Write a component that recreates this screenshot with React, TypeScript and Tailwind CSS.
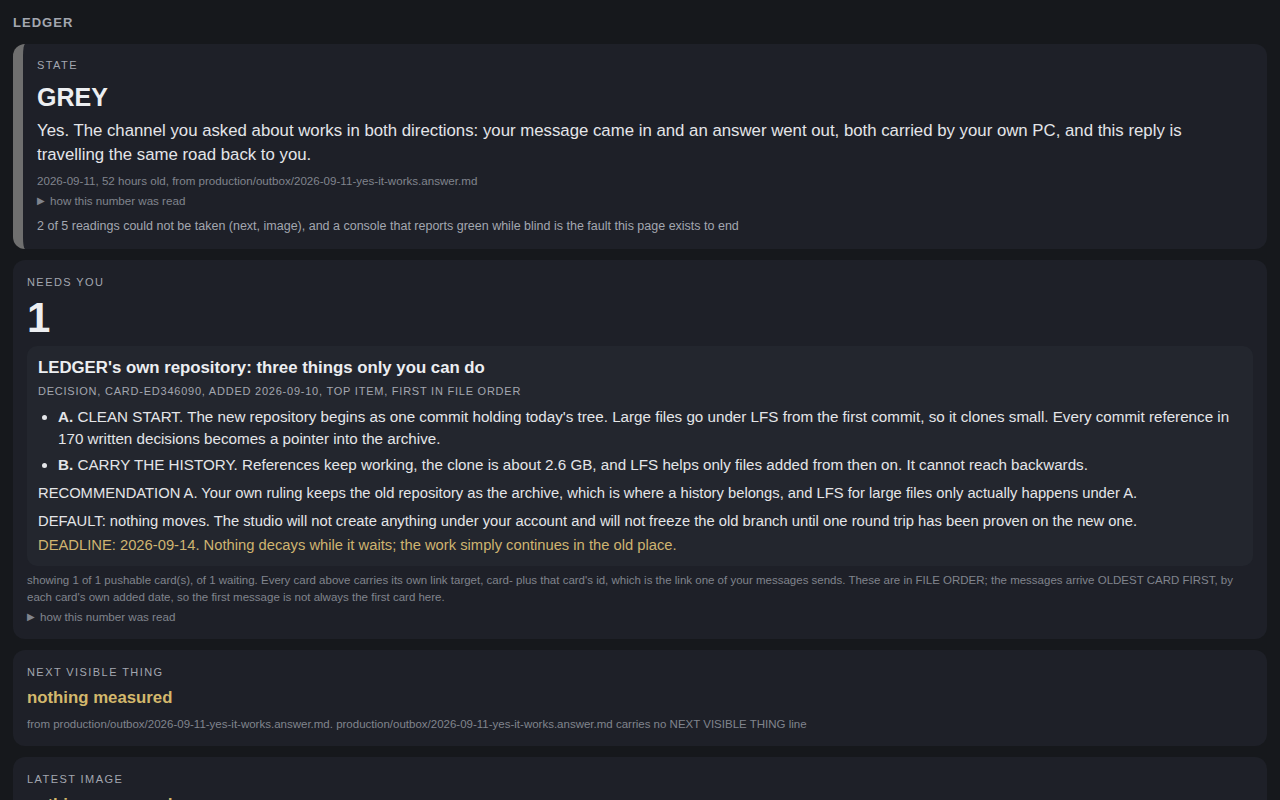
const font = { fontFamily: '"Liberation Sans", Arial, sans-serif' };

function Label({ children }: { children: React.ReactNode }) {
  return (
    <div className="text-[11px] leading-4 tracking-[0.13em] uppercase text-[#a3a7b0]">
      {children}
    </div>
  );
}

function HowRead({ className = "" }: { className?: string }) {
  return (
    <div className={"text-[11.6px] leading-4 text-[#80848d] flex items-center gap-[5px] " + className}>
      <span className="text-[10px]">▶</span>
      <span>how this number was read</span>
    </div>
  );
}

export default function App() {
  return (
    <div style={font} className="min-h-screen bg-[#16181c] px-[13px] pt-[15px] pb-6 text-[#e6e7ea]">
      <div className="text-[13px] leading-4 font-bold tracking-[0.08em] text-[#a3a7b0]">LEDGER</div>

      <div className="mt-[13px] flex flex-col gap-[11px]">
        {/* state */}
        <section className="rounded-xl bg-[#1e2028] border-l-[10px] border-[#6f6f6f] pl-[14px] pr-[14px] pt-[13px] pb-[14px]">
          <Label>STATE</Label>
          <div className="mt-[8px] text-[25px] leading-8 font-bold text-[#eceef1]">GREY</div>
          <p className="mt-[6px] text-[16.8px] leading-6 text-[#e4e5e8]">
            Yes. The channel you asked about works in both directions: your message came in and an answer went out,
            both carried by your own PC, and this reply is travelling the same road back to you.
          </p>
          <div className="mt-[6px] text-[11.6px] leading-4 text-[#80848d]">
            2026-09-11, 52 hours old, from production/outbox/2026-09-11-yes-it-works.answer.md
          </div>
          <HowRead className="mt-[4px]" />
          <div className="mt-[8px] text-[12.5px] leading-[18px] text-[#a3a7b0]">
            2 of 5 readings could not be taken (next, image), and a console that reports green while blind is the fault
            this page exists to end
          </div>
        </section>

        {/* needs you */}
        <section className="rounded-xl bg-[#1e2028] p-[14px]">
          <Label>NEEDS YOU</Label>
          <div className="mt-[6px] text-[42px] leading-[44px] font-bold text-[#eceef1]">1</div>
          <div className="mt-[6px] rounded-[10px] bg-[#23262e] px-[11px] pt-[11px] pb-[10px]">
            <div className="text-[16.8px] leading-[22px] font-bold text-[#eceef1]">
              LEDGER's own repository: three things only you can do
            </div>
            <div className="mt-[4px] text-[11px] leading-4 tracking-[0.07em] uppercase text-[#a3a7b0]">
              DECISION, CARD-ED346090, ADDED 2026-09-10, TOP ITEM, FIRST IN FILE ORDER
            </div>
            <ul className="mt-[7px] list-disc pl-5 text-[15.2px] leading-[22px] text-[#e4e5e8]">
              <li>
                <b>A.</b> CLEAN START. The new repository begins as one commit holding today's tree. Large files go under
                LFS from the first commit, so it clones small. Every commit reference in 170 written decisions becomes a
                pointer into the archive.
              </li>
              <li className="mt-[4px]">
                <b>B.</b> CARRY THE HISTORY. References keep working, the clone is about 2.6 GB, and LFS helps only files
                added from then on. It cannot reach backwards.
              </li>
            </ul>
            <p className="mt-[6px] text-[14.75px] leading-[22px] text-[#e4e5e8]">
              RECOMMENDATION A. Your own ruling keeps the old repository as the archive, which is where a history
              belongs, and LFS for large files only actually happens under A.
            </p>
            <p className="mt-[6px] text-[14.75px] leading-[22px] text-[#e4e5e8]">
              DEFAULT: nothing moves. The studio will not create anything under your account and will not freeze the old
              branch until one round trip has been proven on the new one.
            </p>
            <p className="mt-[2px] text-[14.75px] leading-[22px] text-[#cfb470]">
              DEADLINE: 2026-09-14. Nothing decays while it waits; the work simply continues in the old place.
            </p>
          </div>
          <div className="mt-[6px] text-[11.5px] leading-[17px] text-[#80848d]">
            showing 1 of 1 pushable card(s), of 1 waiting. Every card above carries its own link target, card- plus that
            card's id, which is the link one of your messages sends. These are in FILE ORDER; the messages arrive OLDEST
            CARD FIRST, by each card's own added date, so the first message is not always the first card here.
          </div>
          <HowRead className="mt-[3px]" />
        </section>

        {/* next visible thing */}
        <section className="rounded-xl bg-[#1e2028] p-[14px]">
          <Label>NEXT VISIBLE THING</Label>
          <div className="mt-[7px] text-[16.8px] leading-[22px] font-bold text-[#d3b86c]">nothing measured</div>
          <div className="mt-[7px] text-[11.5px] leading-4 text-[#80848d]">
            from production/outbox/2026-09-11-yes-it-works.answer.md. production/outbox/2026-09-11-yes-it-works.answer.md
            carries no NEXT VISIBLE THING line
          </div>
        </section>

        {/* latest image */}
        <section className="rounded-xl bg-[#1e2028] p-[14px]">
          <Label>LATEST IMAGE</Label>
          <div className="mt-[7px] text-[16.8px] leading-[22px] font-bold text-[#d3b86c]">nothing measured</div>
          <div className="mt-[7px] text-[11.5px] leading-4 text-[#80848d]">
            2 of 5 readings could not be taken (next, image)
          </div>
        </section>
      </div>
    </div>
  );
}
